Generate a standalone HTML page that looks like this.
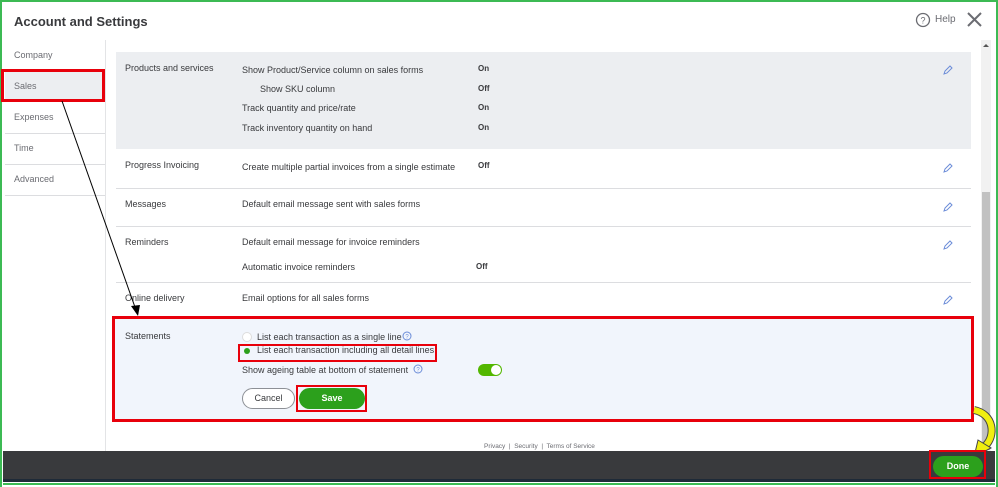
<!DOCTYPE html>
<html><head><meta charset="utf-8"><style>
*{margin:0;padding:0;box-sizing:border-box}
body{width:998px;height:487px;position:relative;background:#fff;font-family:"Liberation Sans",sans-serif;overflow:hidden;color:#393a3d}
.a{position:absolute}
.t{font-size:9px;color:#393a3d;white-space:nowrap}
.nav{font-size:9px;color:#6b6c72}
.hr{position:absolute;height:1px;background:#dcdde0}
.v{font-size:8px;font-weight:bold;color:#393a3d}
.pen{position:absolute;width:10px;height:10px}
</style></head><body>
<div class="a" style="left:0;top:0;width:998px;height:487px;border:2px solid #3cba54;border-bottom:none"></div>
<div class="a" style="left:14px;top:14px;font-size:13px;font-weight:bold;color:#393a3d">Account and Settings</div>
<svg class="a" style="left:915px;top:12px" width="16" height="16"><circle cx="8" cy="8" r="6.5" fill="none" stroke="#6b6c72" stroke-width="1.3"/><text x="8" y="11.5" font-size="9" text-anchor="middle" fill="#6b6c72" font-family="Liberation Sans">?</text></svg>
<div class="a" style="left:935px;top:14px;font-size:10px;color:#6b6c72">Help</div>
<svg class="a" style="left:966px;top:11px" width="17" height="17"><path d="M2 2L15 15M15 2L2 15" stroke="#6b6c72" stroke-width="2"/></svg>
<!-- nav -->
<div class="a" style="left:105px;top:40px;width:1px;height:411px;background:#e3e4e6"></div>
<div class="a nav" style="left:14px;top:50px">Company</div>
<div class="a" style="left:5px;top:72px;width:100px;height:29px;background:#eceef1"></div>
<div class="a nav" style="left:14px;top:81px">Sales</div>
<div class="a" style="left:1px;top:69px;width:104px;height:33px;border:3px solid #e8000b"></div>
<div class="hr" style="left:5px;top:133px;width:100px"></div>
<div class="hr" style="left:5px;top:164px;width:100px"></div>
<div class="hr" style="left:5px;top:195px;width:100px"></div>
<div class="a nav" style="left:14px;top:112px">Expenses</div>
<div class="a nav" style="left:14px;top:143px">Time</div>
<div class="a nav" style="left:14px;top:174px">Advanced</div>
<!-- scrollbar -->
<div class="a" style="left:981px;top:40px;width:10px;height:411px;background:#f1f1f1"></div>
<div class="a" style="left:982px;top:192px;width:8px;height:258px;background:#c1c1c1"></div>
<div class="a" style="left:983px;top:44px;width:0;height:0;border-left:3px solid transparent;border-right:3px solid transparent;border-bottom:3px solid #555"></div>
<!-- products -->
<div class="a" style="left:116px;top:52px;width:855px;height:97px;background:#eceef1"></div>
<div class="a t" style="left:125px;top:63px">Products and services</div>
<div class="a t" style="left:242px;top:65px">Show Product/Service column on sales forms</div>
<div class="a t" style="left:260px;top:84px">Show SKU column</div>
<div class="a t" style="left:242px;top:103px">Track quantity and price/rate</div>
<div class="a t" style="left:242px;top:123px">Track inventory quantity on hand</div>
<div class="a v" style="left:478px;top:64px">On</div>
<div class="a v" style="left:478px;top:84px">Off</div>
<div class="a v" style="left:478px;top:103px">On</div>
<div class="a v" style="left:478px;top:123px">On</div>
<div class="hr" style="left:116px;top:188px;width:855px"></div>
<div class="a t" style="left:125px;top:160px">Progress Invoicing</div>
<div class="a t" style="left:242px;top:162px">Create multiple partial invoices from a single estimate</div>
<div class="a v" style="left:478px;top:161px">Off</div>
<div class="hr" style="left:116px;top:226px;width:855px"></div>
<div class="a t" style="left:125px;top:199px">Messages</div>
<div class="a t" style="left:242px;top:199px">Default email message sent with sales forms</div>
<div class="hr" style="left:116px;top:282px;width:855px"></div>
<div class="a t" style="left:125px;top:237px">Reminders</div>
<div class="a t" style="left:242px;top:237px">Default email message for invoice reminders</div>
<div class="a t" style="left:242px;top:262px">Automatic invoice reminders</div>
<div class="a v" style="left:476px;top:262px">Off</div>
<div class="a t" style="left:125px;top:293px">Online delivery</div>
<div class="a t" style="left:242px;top:293px">Email options for all sales forms</div>
<svg class="pen" style="left:943px;top:65px" viewBox="0 0 10 10"><path d="M1 9L2 6L7 1L9 3L4 8Z" fill="none" stroke="#6b8cd8" stroke-width="1"/></svg>
<svg class="pen" style="left:943px;top:163px" viewBox="0 0 10 10"><path d="M1 9L2 6L7 1L9 3L4 8Z" fill="none" stroke="#6b8cd8" stroke-width="1"/></svg>
<svg class="pen" style="left:943px;top:202px" viewBox="0 0 10 10"><path d="M1 9L2 6L7 1L9 3L4 8Z" fill="none" stroke="#6b8cd8" stroke-width="1"/></svg>
<svg class="pen" style="left:943px;top:240px" viewBox="0 0 10 10"><path d="M1 9L2 6L7 1L9 3L4 8Z" fill="none" stroke="#6b8cd8" stroke-width="1"/></svg>
<svg class="pen" style="left:943px;top:295px" viewBox="0 0 10 10"><path d="M1 9L2 6L7 1L9 3L4 8Z" fill="none" stroke="#6b8cd8" stroke-width="1"/></svg>
<!-- statements -->
<div class="a" style="left:112px;top:316px;width:862px;height:106px;background:#f1f5fc;border:3px solid #e8000b"></div>
<div class="a t" style="left:125px;top:331px">Statements</div>
<div class="a" style="left:242px;top:332px;width:10px;height:10px;border-radius:50%;background:#fff;border:1px solid #ddd"></div>
<div class="a t" style="left:257px;top:332px">List each transaction as a single line</div>
<svg class="a" style="left:402px;top:331px" width="10" height="10"><circle cx="5" cy="5" r="4" fill="none" stroke="#6b8cd8"/><text x="5" y="7.5" font-size="6" text-anchor="middle" fill="#6b8cd8">?</text></svg>
<div class="a" style="left:238px;top:344px;width:199px;height:18px;border:2px solid #e8000b"></div>
<div class="a" style="left:244px;top:348px;width:6px;height:6px;border-radius:50%;background:#2ca01c"></div>
<div class="a t" style="left:257px;top:345px">List each transaction including all detail lines</div>
<div class="a t" style="left:242px;top:365px">Show ageing table at bottom of statement</div>
<svg class="a" style="left:413px;top:364px" width="10" height="10"><circle cx="5" cy="5" r="4" fill="none" stroke="#6b8cd8"/><text x="5" y="7.5" font-size="6" text-anchor="middle" fill="#6b8cd8">?</text></svg>
<div class="a" style="left:478px;top:364px;width:24px;height:12px;border-radius:6px;background:#53b700"></div>
<div class="a" style="left:491px;top:365px;width:10px;height:10px;border-radius:50%;background:#fff"></div>
<div class="a" style="left:242px;top:388px;width:53px;height:21px;border:1px solid #8d9096;border-radius:11px;background:#fff;font-size:9px;text-align:center;line-height:19px">Cancel</div>
<div class="a" style="left:296px;top:385px;width:71px;height:27px;border:2px solid #e8000b"></div>
<div class="a" style="left:299px;top:388px;width:66px;height:21px;border-radius:11px;background:#2ca01c;color:#fff;font-size:9px;font-weight:bold;text-align:center;line-height:21px">Save</div>
<div class="a" style="left:484px;top:443px;font-size:6.5px;color:#6b6c72">Privacy &nbsp;|&nbsp; Security &nbsp;|&nbsp; Terms of Service</div>
<!-- arrows -->
<svg class="a" style="left:0;top:0" width="998" height="487"><line x1="62" y1="101" x2="136" y2="310" stroke="#000" stroke-width="1"/><path d="M131 306L140 305L138 316Z" fill="#000"/>
<path d="M974 410C994 414 996 436 985 446" fill="none" stroke="#444" stroke-width="8"/><path d="M974 410C994 414 996 436 985 446" fill="none" stroke="#f0ee10" stroke-width="6"/><path d="M978 440L991 448L974 457Z" fill="#f0ee10" stroke="#444" stroke-width="1"/></svg>
<!-- footer -->
<div class="a" style="left:3px;top:451px;width:992px;height:28px;background:#393a3d"></div>
<div class="a" style="left:3px;top:479px;width:992px;height:3px;background:#1e2a38"></div>
<div class="a" style="left:3px;top:483px;width:992px;height:2px;background:#3cba54"></div>
<div class="a" style="left:929px;top:450px;width:57px;height:29px;border:2px solid #e8000b"></div>
<div class="a" style="left:933px;top:456px;width:50px;height:21px;border-radius:11px;background:#2ca01c;color:#fff;font-size:9px;font-weight:bold;text-align:center;line-height:21px">Done</div>
</body></html>
